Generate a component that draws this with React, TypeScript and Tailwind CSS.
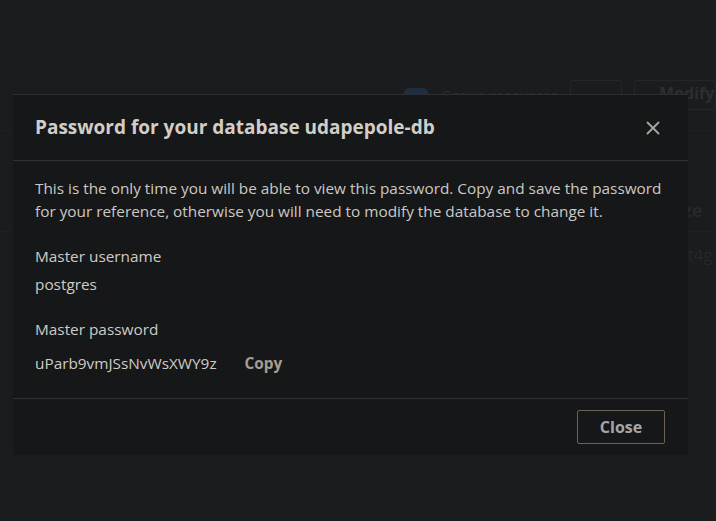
import { X } from 'lucide-react'

const font = { fontFamily: "'Open Sans', 'Noto Sans', sans-serif" }

function BackgroundPage() {
  return (
    <div className="w-[716px] h-[521px] bg-[#1b1c1e] opacity-60">
      <div className="h-[58px] border-b border-[#202124]" />
      <div className="flex items-center justify-end gap-3 pt-[22px]">
        <div className="flex items-center gap-3">
          <div className="w-[26px] h-[14px] rounded-full bg-[#1f3a55]" />
          <span className="text-[15px] text-[#3a3b3d]">Group resources</span>
        </div>
        <div className="w-[52px] h-[30px] border border-[#2c2d30] rounded-[2px]" />
        <div className="w-[82px] h-[30px] border border-[#2c2d30] rounded-[2px] pl-6 text-[16px] font-bold text-[#3a3b3d]">
          Modify
        </div>
      </div>
      <div className="mt-[20px] border-t border-[#232427]" />
      <div className="flex justify-end items-end h-[100px] pb-[7px] text-[18px] font-bold text-[#2e2f31]">
        <span className="w-[33px]">ze</span>
      </div>
      <div className="border-t border-[#232427]" />
      <div className="flex justify-end pt-[10px] text-[17px] text-[#2e2f31]">
        <span className="w-[33px] whitespace-nowrap">.t4g</span>
      </div>
    </div>
  )
}

function PasswordModal() {
  return (
    <div className="absolute left-[13px] top-[94px] w-[675px] bg-[#161719] border-t border-[#2c2e31] text-[#cfcbc4]">
      {/* Header */}
      <div className="flex items-center justify-between h-[66px] pl-[22px] pr-[24px] border-b border-[#2f3134]">
        <h2 className="text-[19px] font-bold text-[#d2cec7]">Password for your database udapepole-db</h2>
        <X className="w-[22px] h-[22px] text-[#a9a59d]" strokeWidth={2} />
      </div>

      {/* Body */}
      <div className="pl-[22px] pr-[20px] pt-[16px] pb-[24px] text-[15.35px]">
        <p className="leading-[23px] text-[#cdc9c2]">
          This is the only time you will be able to view this password. Copy and save the password for your
          reference, otherwise you will need to modify the database to change it.
        </p>
        <div className="mt-[22px] leading-[22px]">Master username</div>
        <div className="mt-[6px] leading-[22px]">postgres</div>
        <div className="mt-[23px] leading-[22px]">Master password</div>
        <div className="mt-[12px] flex items-center gap-7 leading-[22px]">
          <span>uParb9vmJSsNvWsXWY9z</span>
          <span className="font-bold text-[#a59e92]">Copy</span>
        </div>
      </div>

      {/* Footer */}
      <div className="flex justify-end items-center h-[57px] pr-[23px] border-t border-[#2f3134]">
        <button className="w-[88px] h-[34px] border border-[#6a6254] rounded-[2px] text-[16px] font-bold text-[#a3a7a8]">
          Close
        </button>
      </div>
    </div>
  )
}

export default function App() {
  return (
    <div className="relative w-[716px] h-[521px] overflow-hidden bg-[#1b1c1e]" style={font}>
      <BackgroundPage />
      <PasswordModal />
    </div>
  )
}
